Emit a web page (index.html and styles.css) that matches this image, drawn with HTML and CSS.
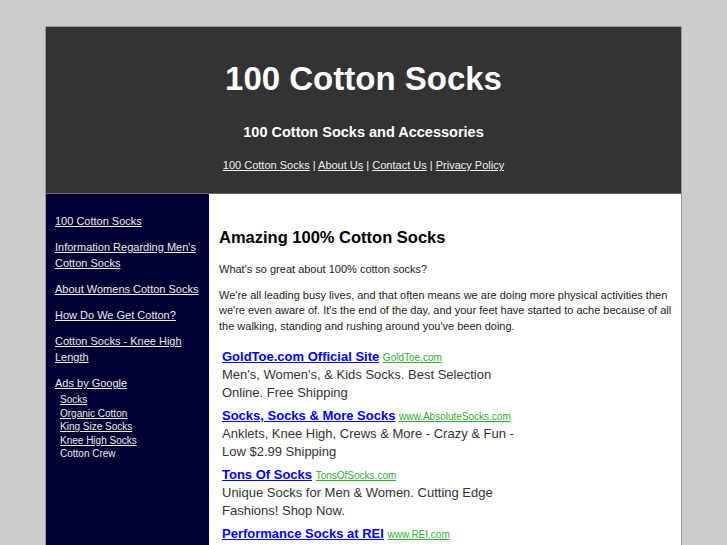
FILE: index.html
```html
<!DOCTYPE html>
<html>
<head>
<meta charset="utf-8">
<title>100 Cotton Socks</title>
<link rel="stylesheet" href="styles.css">
</head>
<body>
<div class="page">
  <header class="masthead">
    <h1 class="site-title">100 Cotton Socks</h1>
    <p class="tagline">100 Cotton Socks and Accessories</p>
    <nav class="topnav">
      <a href="#">100 Cotton Socks</a> | <a href="#">About Us</a> | <a href="#">Contact Us</a> | <a href="#">Privacy Policy</a>
    </nav>
  </header>
  <div class="body">
    <aside class="sidebar">
      <ul class="side-links">
        <li><a href="#">100 Cotton Socks</a></li>
        <li><a href="#">Information Regarding Men's Cotton Socks</a></li>
        <li><a href="#">About Womens Cotton Socks</a></li>
        <li><a href="#">How Do We Get Cotton?</a></li>
        <li><a href="#">Cotton Socks - Knee High Length</a></li>
      </ul>
      <div class="side-ads">
        <a class="ads-label" href="#">Ads by Google</a>
        <ul class="ad-links">
          <li><a href="#">Socks</a></li>
          <li><a href="#">Organic Cotton</a></li>
          <li><a href="#">King Size Socks</a></li>
          <li><a href="#">Knee High Socks</a></li>
          <li><a class="plain" href="#">Cotton Crew</a></li>
        </ul>
      </div>
    </aside>
    <main class="content">
      <h2 class="headline">Amazing 100% Cotton Socks</h2>
      <p class="intro">What's so great about 100% cotton socks?</p>
      <p class="para">We're all leading busy lives, and that often means we are doing more physical activities then we're even aware of. It's the end of the day, and your feet have started to ache because of all the walking, standing and rushing around you've been doing.</p>
      <div class="ads">
        <div class="ad">
          <div class="ad-title"><a class="ad-head" href="#">GoldToe.com Official Site</a> <a class="ad-url" href="#">GoldToe.com</a></div>
          <div class="ad-desc">Men's, Women's, &amp; Kids Socks. Best Selection Online. Free Shipping</div>
        </div>
        <div class="ad">
          <div class="ad-title"><a class="ad-head" href="#">Socks, Socks &amp; More Socks</a> <a class="ad-url" href="#">www.AbsoluteSocks.com</a></div>
          <div class="ad-desc">Anklets, Knee High, Crews &amp; More - Crazy &amp; Fun - Low $2.99 Shipping</div>
        </div>
        <div class="ad">
          <div class="ad-title"><a class="ad-head" href="#">Tons Of Socks</a> <a class="ad-url" href="#">TonsOfSocks.com</a></div>
          <div class="ad-desc">Unique Socks for Men &amp; Women. Cutting Edge Fashions! Shop Now.</div>
        </div>
        <div class="ad">
          <div class="ad-title"><a class="ad-head" href="#">Performance Socks at REI</a> <a class="ad-url" href="#">www.REI.com</a></div>
          <div class="ad-desc">Shop Performance Socks at REI. Free Shipping on Orders Over $50.</div>
        </div>
      </div>
    </main>
  </div>
</div>
</body>
</html>
```

FILE: styles.css
```css
html, body {
  margin: 0;
  padding: 0;
}
body {
  background: #cccccc;
  font-family: "Liberation Sans", Arial, sans-serif;
  font-size: 11px;
  color: #222;
}
.page {
  width: 635px;
  margin: 26px auto 0;
  border: 1px solid #9a9a9a;
  border-bottom: none;
  background: #fff;
}
.masthead {
  background: #333333;
  color: #fff;
  text-align: center;
  padding: 33px 0 21px;
  border-bottom: 1px solid #666;
}
.site-title {
  margin: 0;
  font-size: 33px;
  line-height: 37px;
  font-weight: bold;
}
.tagline {
  margin: 26px 0 0;
  font-size: 14.5px;
  line-height: 18px;
  font-weight: bold;
}
.topnav {
  margin-top: 17px;
  line-height: 14px;
  font-size: 11px;
  color: #eee;
}
.topnav a {
  color: #eee;
}
.body {
  display: flex;
  align-items: stretch;
  min-height: 360px;
}
.sidebar {
  width: 163px;
  flex: 0 0 163px;
  background: #000033;
  padding: 19px 0 0 9px;
  box-sizing: border-box;
}
.side-links {
  list-style: none;
  margin: 0;
  padding: 0;
}
.side-links li {
  line-height: 16px;
  margin-bottom: 10px;
}
.side-links a, .side-ads a {
  color: #ececec;
}
.side-ads {
  line-height: 16px;
}
.ad-links {
  list-style: none;
  margin: 2px 0 0;
  padding: 0 0 0 5px;
  font-size: 10px;
  line-height: 13.6px;
}
.ad-links a.plain {
  text-decoration: none;
}
.content {
  flex: 1;
  padding: 34px 3px 0 10px;
}
.headline {
  margin: 0;
  font-size: 16.5px;
  line-height: 19px;
  color: #000;
}
.intro {
  margin: 14.5px 0 0;
  line-height: 15.5px;
}
.para {
  margin: 10.5px 0 0;
  line-height: 15.5px;
}
.ads {
  margin-top: 14px;
  padding-left: 3px;
  width: 300px;
}
.ad {
  margin-bottom: 5px;
}
.ad-title {
  font-size: 13px;
  line-height: 18px;
  height: 18px;
}
.ad-head {
  color: #0000ff;
  font-weight: bold;
}
.ad-url {
  color: #33aa33;
  font-size: 10px;
  line-height: 10px;
}
.ad-desc {
  font-size: 13px;
  line-height: 18px;
  color: #333;
}
```
